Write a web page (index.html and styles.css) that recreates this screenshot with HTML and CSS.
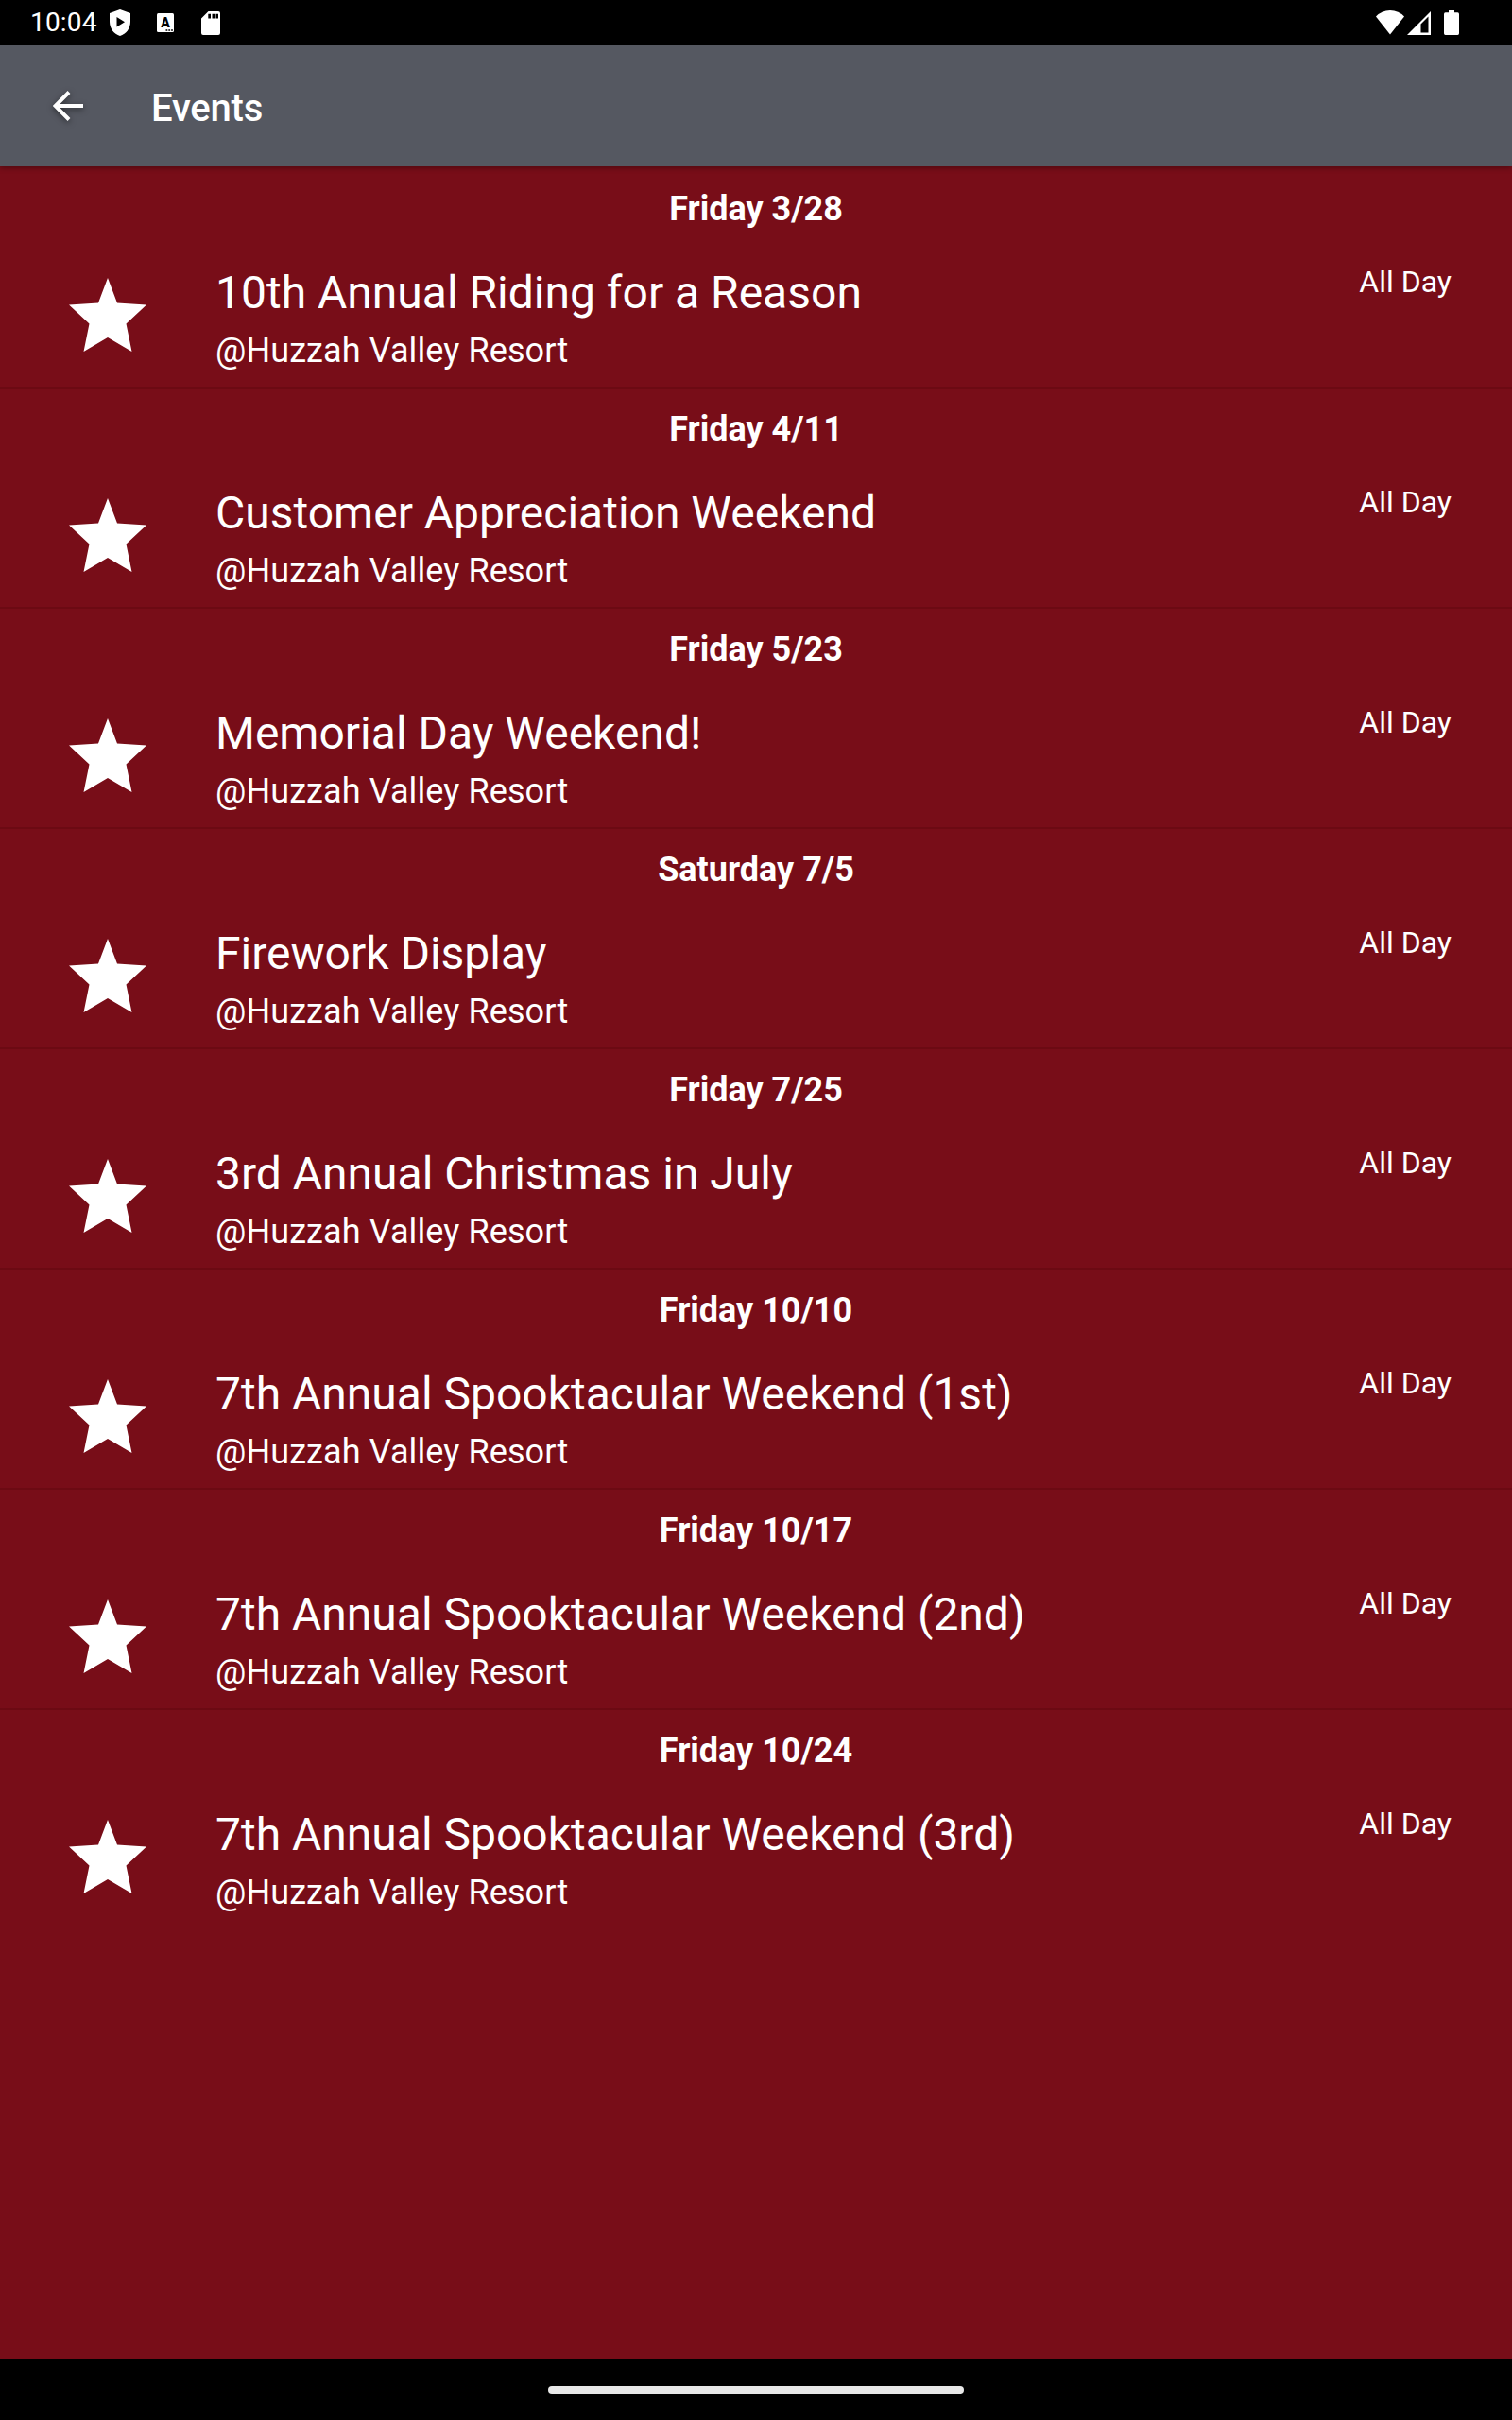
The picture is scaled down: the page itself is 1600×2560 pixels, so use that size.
FILE: index.html
```html
<!DOCTYPE html>
<html lang="en">
    <head>
        <meta charset="utf-8">
        <title>Events</title>
        <link rel="stylesheet" href="styles.css">
    </head>
    <body>

        <svg class="symbols">
            <symbol id="star" viewBox="0 0 84 80">
                <path d="M42 1 L52 27.500 L83 29.500 L61.500 49.500 L67.500 79 L42 64 L16.500 79 L22.500 49.500 L1 29.500 L32 27.500 Z"/>
            </symbol>
        </svg>

        <div class="statusbar">
            <div class="left">
                <span class="clock">10:04</span>
                <svg class="shield" width="22" height="28" viewBox="0 0 22 28"><path fill-rule="evenodd" d="M11 0 L22 4 V13 C22 20 17.500 26 11 28 C4.500 26 0 20 0 13 V4 Z M7.500 8 V18.500 L16 13.200 Z"/></svg>
                <svg class="keyboard" width="18" height="20" viewBox="0 0 18 20"><rect width="18" height="20" rx="1.500"/><text x="9" y="14.500" text-anchor="middle">A</text><path class="dots" d="M9.500 18 H17" stroke-dasharray="1.800 1"/></svg>
                <svg class="sdcard" width="20" height="25" viewBox="0 0 20 25"><path fill-rule="evenodd" d="M7.500 0 H18 Q20 0 20 2 V23 Q20 25 18 25 H2 Q0 25 0 23 V7.500 Z M7.300 2.800 V7.500 H10 V2.800 Z M11.500 2.800 V7.500 H14 V2.800 Z M15.500 2.800 V7.500 H18 V2.800 Z"/></svg>
            </div>
            <div class="right">
                <svg class="wifi" width="30" height="26" viewBox="0 0 30 26"><path d="M0 6.500 Q6 0 15 0 T30 6.500 L15 25.500 Z"/></svg>
                <svg class="signal" width="25" height="25" viewBox="0 0 25 25"><path fill-rule="evenodd" d="M25 0 V25 H0 Z M14.500 13.500 V22.500 H22.500 V5.500 Z"/></svg>
                <svg class="battery" width="16" height="26" viewBox="0 0 16 26"><path d="M5 0 H11 V2.300 H14.500 Q16 2.300 16 4 V24.300 Q16 26 14.500 26 H1.500 Q0 26 0 24.300 V4 Q0 2.300 1.500 2.300 H5 Z"/></svg>
            </div>
        </div>

        <div class="toolbar">
            <svg class="back" width="32" height="32" viewBox="0 0 32 32"><path d="M32 16 H3 M17 1.500 L2.500 16 L17 30.500"/></svg>
            <h1>Events</h1>
        </div>

        <div class="events">
            <div class="event">
                <h2>Friday 3/28</h2>
                <div class="row">
                    <svg class="star"><use href="#star"/></svg>
                    <div class="info"><h3>10th Annual Riding for a Reason</h3><p>@Huzzah Valley Resort</p></div>
                    <span class="time">All Day</span>
                </div>
            </div>
            <div class="event">
                <h2>Friday 4/11</h2>
                <div class="row">
                    <svg class="star"><use href="#star"/></svg>
                    <div class="info"><h3>Customer Appreciation Weekend</h3><p>@Huzzah Valley Resort</p></div>
                    <span class="time">All Day</span>
                </div>
            </div>
            <div class="event">
                <h2>Friday 5/23</h2>
                <div class="row">
                    <svg class="star"><use href="#star"/></svg>
                    <div class="info"><h3>Memorial Day Weekend!</h3><p>@Huzzah Valley Resort</p></div>
                    <span class="time">All Day</span>
                </div>
            </div>
            <div class="event">
                <h2>Saturday 7/5</h2>
                <div class="row">
                    <svg class="star"><use href="#star"/></svg>
                    <div class="info"><h3>Firework Display</h3><p>@Huzzah Valley Resort</p></div>
                    <span class="time">All Day</span>
                </div>
            </div>
            <div class="event">
                <h2>Friday 7/25</h2>
                <div class="row">
                    <svg class="star"><use href="#star"/></svg>
                    <div class="info"><h3>3rd Annual Christmas in July</h3><p>@Huzzah Valley Resort</p></div>
                    <span class="time">All Day</span>
                </div>
            </div>
            <div class="event">
                <h2>Friday 10/10</h2>
                <div class="row">
                    <svg class="star"><use href="#star"/></svg>
                    <div class="info"><h3>7th Annual Spooktacular Weekend (1st)</h3><p>@Huzzah Valley Resort</p></div>
                    <span class="time">All Day</span>
                </div>
            </div>
            <div class="event">
                <h2>Friday 10/17</h2>
                <div class="row">
                    <svg class="star"><use href="#star"/></svg>
                    <div class="info"><h3>7th Annual Spooktacular Weekend (2nd)</h3><p>@Huzzah Valley Resort</p></div>
                    <span class="time">All Day</span>
                </div>
            </div>
            <div class="event">
                <h2>Friday 10/24</h2>
                <div class="row">
                    <svg class="star"><use href="#star"/></svg>
                    <div class="info"><h3>7th Annual Spooktacular Weekend (3rd)</h3><p>@Huzzah Valley Resort</p></div>
                    <span class="time">All Day</span>
                </div>
            </div>
        </div>

        <div class="navbar"><div class="handle"></div></div>

    </body>
</html>
```
FILE: styles.css
```css
* { margin: 0; padding: 0; box-sizing: border-box; }
html, body { width: 100%; height: 100%; }
body { display: flex; flex-direction: column; min-height: 2560px; background: #780d18; color: #ffffff; font-family: Roboto, sans-serif; }
svg { display: block; flex: none; fill: #ffffff; }
.symbols { display: none; }

.statusbar { height: 48px; background: #000000; display: flex; justify-content: space-between; padding: 0 56px 0 32px; }
.statusbar .left, .statusbar .right { display: flex; align-items: center; }
.statusbar .clock { font-size: 28px; line-height: 48px; width: 84px; white-space: nowrap; letter-spacing: 0.2px; }
.statusbar .keyboard { margin-left: 28px; }
.statusbar .keyboard text { fill: #000000; font-size: 14px; font-weight: 900; }
.statusbar .keyboard .dots { fill: none; stroke: #000000; stroke-width: 1.6; }
.statusbar .sdcard { margin-left: 29px; }
.statusbar .signal { margin-left: 3px; }
.statusbar .battery { margin-left: 14px; }

.toolbar { height: 128px; background: #555861; display: flex; align-items: center; padding-left: 56px; box-shadow: 0 1px 6px rgba(0, 0, 0, 0.4); }
.toolbar .back { fill: none; stroke: #ffffff; stroke-width: 4; filter: drop-shadow(0 2px 3px rgba(0, 0, 0, 0.5)); }
.toolbar h1 { font-size: 40px; font-weight: 500; line-height: 48px; letter-spacing: -0.2px; margin: 5px 0 0 72px; }

.events { flex: 1; }
.event { height: 233px; border-top: 2px solid #6c0a13; }
.event:first-child { border-color: transparent; }
.event h2 { font-size: 36px; font-weight: bold; line-height: 42px; padding-top: 22px; text-align: center; }
.event .row { display: flex; align-items: flex-start; padding: 40px 64px 0 72px; }
.event .star { width: 84px; height: 80px; margin: 11px 72px 0 0; }
.event .info { flex: 1; }
.event h3 { font-size: 48px; font-weight: normal; line-height: 56px; }
.event p { font-size: 36px; line-height: 42px; letter-spacing: 0.1px; margin-top: 12px; }
.event .time { font-size: 32px; line-height: 38px; margin-top: -3px; }

.navbar { height: 64px; background: #000000; display: flex; justify-content: center; padding-top: 28px; }
.navbar .handle { width: 440px; height: 8px; border-radius: 4px; background: #e8e8e8; }
```
